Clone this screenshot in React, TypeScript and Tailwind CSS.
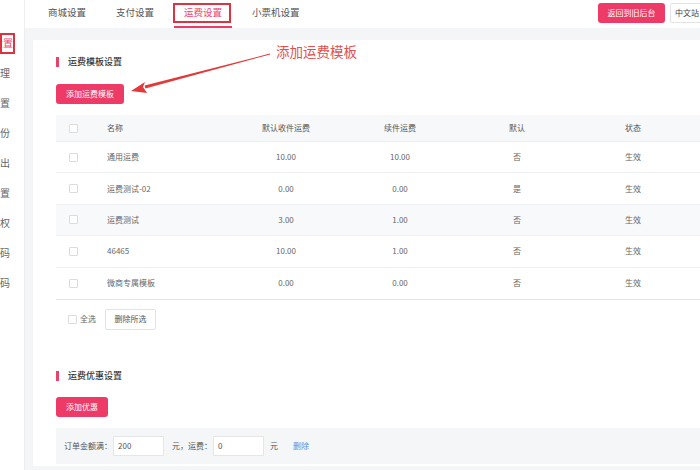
import React from "react";

const sideItems = [
  { label: "运费设置", active: true },
  { label: "订单管理" },
  { label: "支付设置" },
  { label: "数据备份" },
  { label: "订单导出" },
  { label: "短信设置" },
  { label: "权限授权" },
  { label: "推广二维码" },
  { label: "商品条码" },
];

const rows = [
  { name: "通用运费", a: "10.00", b: "10.00", d: "否", gray: false },
  { name: "运费测试-02", a: "0.00", b: "0.00", d: "是", gray: false },
  { name: "运费测试", a: "3.00", b: "1.00", d: "否", gray: true },
  { name: "46465", a: "10.00", b: "1.00", d: "否", gray: false },
  { name: "微商专属模板", a: "0.00", b: "0.00", d: "否", gray: false },
];

function Check() {
  return <span className="block w-[9px] h-[9px] border border-[#dcdcdc] rounded-[1px] bg-white" />;
}

function SectionTitle({ text }: { text: string }) {
  return (
    <div className="flex items-center h-[10px]">
      <span className="w-[3px] h-[10px] bg-[#e9436c]" />
      <span className="ml-[9px] text-[9px] leading-[10px] font-medium text-[#333]">{text}</span>
    </div>
  );
}

export default function App() {
  return (
    <div className="relative w-[700px] h-[470px] overflow-hidden flex bg-white font-['Noto_Sans_CJK_SC',sans-serif]">
      {/* sidebar */}
      <aside className="w-[25px] h-full bg-white border-r border-[#eceef1] pt-[28px] shrink-0">
        {sideItems.map((it, i) => (
          <div key={i} className="h-[30px] flex items-center">
            <div
              className={
                "flex justify-end overflow-hidden whitespace-nowrap text-[10px] leading-[12px] " +
                (it.active ? "w-[13px] text-[#f0456f]" : "w-[10px] text-[#666]")
              }
            >
              {it.label}
            </div>
          </div>
        ))}
      </aside>

      <div className="flex-1 flex flex-col min-w-0">
        {/* top bar */}
        <header className="h-[28px] bg-white flex items-stretch shrink-0">
          <nav className="flex pl-[13px] gap-[10px] items-stretch">
            {["商城设置", "支付设置", "运费设置", "小票机设置"].map((t) => (
              <div
                key={t}
                className={
                  "px-[10px] flex items-center text-[9.5px] pb-[2px] border-b-2 " +
                  (t === "运费设置" ? "text-[#f0456f] border-[#ee3a66]" : "text-[#555] border-transparent")
                }
              >
                {t}
              </div>
            ))}
          </nav>
          <div className="ml-auto mr-[-12px] flex items-start pt-[3px] gap-[5px]">
            <button className="h-[20px] w-[67px] rounded-[3px] bg-[#ee3a66] text-white text-[8px]">返回到旧后台</button>
            <div className="h-[20px] w-[42px] border border-[#e3e3e3] rounded-l-[2px] bg-white text-[8px] text-[#444] flex items-center pl-[4px]">
              中文站
            </div>
          </div>
        </header>

        {/* content */}
        <main className="flex-1 bg-[#f4f5f7] pl-[8px] pt-[12px] min-h-0">
          <div className="bg-white h-[426px] pl-[23px] pt-[17px]">
            <SectionTitle text="运费模板设置" />
            <button className="mt-[17px] h-[20px] px-[10px] rounded-[3px] bg-[#ee3a66] text-white text-[8px]">
              添加运费模板
            </button>

            {/* table */}
            <div className="mt-[11px] text-[8px] text-[#666] border-b border-[#e2e4e8]">
              <div className="grid grid-cols-[34px_138px_116px_112px_122px_110px_1fr] h-[27px] items-center bg-[#f7f8fa] text-[#555] border-b border-[#eceef1]">
                <div className="flex justify-center"><Check /></div>
                <div className="pl-[17px]">名称</div>
                <div className="text-center">默认收件运费</div>
                <div className="text-center">续件运费</div>
                <div className="text-center">默认</div>
                <div className="text-center">状态</div>
                <div />
              </div>
              {rows.map((r, i) => (
                <div
                  key={i}
                  className={
                    "grid grid-cols-[34px_138px_116px_112px_122px_110px_1fr] h-[31.4px] items-center " +
                    (i < rows.length - 1 ? "border-b border-[#eff0f3] " : "") +
                    (r.gray ? "bg-[#f8f9fb]" : "bg-white")
                  }
                >
                  <div className="flex justify-center"><Check /></div>
                  <div className="pl-[17px]">{r.name}</div>
                  <div className="text-center">{r.a}</div>
                  <div className="text-center">{r.b}</div>
                  <div className="text-center">{r.d}</div>
                  <div className="text-center">生效</div>
                  <div />
                </div>
              ))}
            </div>

            {/* select all */}
            <div className="mt-[9px] flex items-center h-[21px] text-[8px] text-[#666]">
              <span className="ml-[12px]"><Check /></span>
              <span className="ml-[3px]">全选</span>
              <button className="ml-[9px] h-[21px] w-[51px] border border-[#e3e3e3] rounded-[2px] bg-white text-[8px] text-[#555]">
                删除所选
              </button>
            </div>

            <div className="mt-[41px]">
              <SectionTitle text="运费优惠设置" />
            </div>
            <button className="mt-[16px] h-[20px] w-[52px] rounded-[3px] bg-[#ee3a66] text-white text-[8px]">添加优惠</button>

            <div className="mt-[11px] h-[36px] bg-[#f5f6f8] flex items-center pl-[8px] text-[8px] text-[#555]">
              <span>订单金额满：</span>
              <span className="ml-[1px] h-[20px] w-[51px] bg-white border border-[#e6e6e6] flex items-center pl-[4px] text-[#555]">200</span>
              <span className="ml-[8px]">元，运费：</span>
              <span className="ml-[1px] h-[20px] w-[51px] bg-white border border-[#e6e6e6] flex items-center pl-[4px] text-[#555]">0</span>
              <span className="ml-[6px]">元</span>
              <span className="ml-[15px] text-[#5b8fdb]">删除</span>
            </div>
          </div>
        </main>
      </div>

      {/* annotations */}
      <div className="absolute left-0 top-[33px] w-[15px] h-[21px] border-2 border-[#d9343f] pointer-events-none" />
      <div className="absolute left-[173px] top-[3px] w-[58px] h-[20px] border-2 border-[#d9343f] pointer-events-none" />
      <div className="absolute left-[276px] top-[43px] text-[13.5px] leading-[16px] text-[#e2504e] pointer-events-none">
        添加运费模板
      </div>
      <svg className="absolute left-0 top-0 pointer-events-none" width="700" height="470" viewBox="0 0 700 470">
        <polygon points="270.1,54.4 269.9,53.6 144.6,85.4 145.4,88.6" fill="#e23a3a" />
        <polygon points="131,91 145,82 143,87 147,93" fill="#e23a3a" />
      </svg>
    </div>
  );
}
